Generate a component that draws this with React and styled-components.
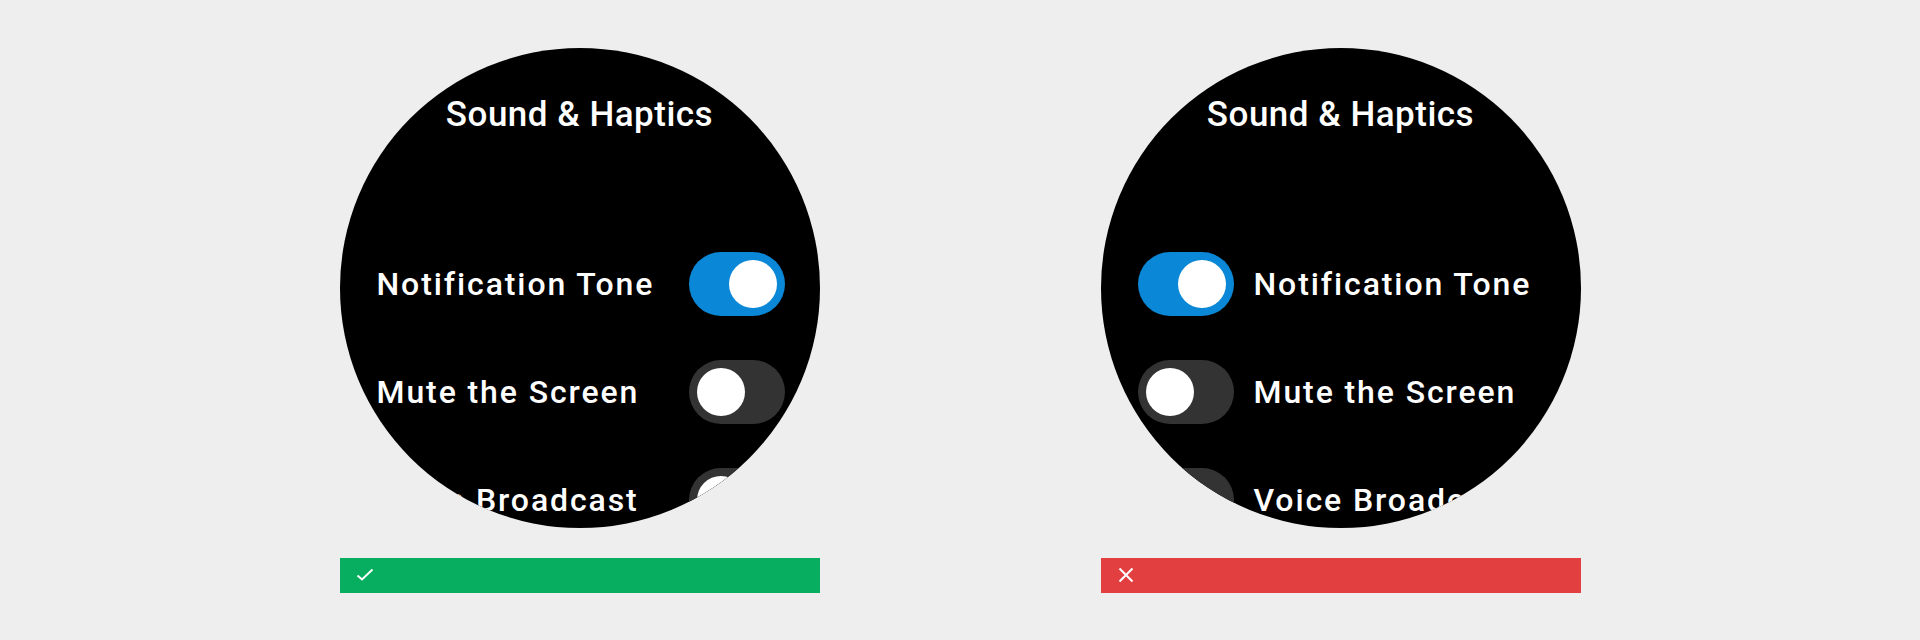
import React from 'react'
import styled, { createGlobalStyle } from 'styled-components'

const GlobalStyle = createGlobalStyle`
  body{
    margin:0;
    background:#eeeeee;
    font-family:Roboto, "Noto Sans", sans-serif;
  }
`

const Page = styled.div`
  height:640px;
  display:flex;
  align-items:center;
  justify-content:center;
  gap:281px;
`

const Panel = styled.div`
  width:480px;
  display:flex;
  flex-direction:column;
  gap:30px;
`

const Watch = styled.div`
  width:480px;
  height:480px;
  border-radius:50%;
  overflow:hidden;
  background:#000;
  color:#fff;
`

const Title = styled.div`
  padding-top:47px;
  font-size:35px;
  font-weight:500;
  letter-spacing:0.5px;
  line-height:40px;
  text-align:center;
`

const List = styled.div`
  margin-top:117px;
  display:flex;
  flex-direction:column;
  gap:44px;
  padding:0 35px 0 37px;
`

const Row = styled.div`
  display:flex;
  align-items:center;
  gap:20px;
  flex-direction:${props => props.flip ? 'row-reverse' : 'row'};
`

const Label = styled.span`
  flex:1;
  font-size:32px;
  font-weight:500;
  letter-spacing:1.9px;
  white-space:nowrap;
`

const Track = styled.div`
  flex:none;
  width:96px;
  height:64px;
  border-radius:32px;
  padding:8px;
  box-sizing:border-box;
  display:flex;
  justify-content:${props => props.on ? 'flex-end' : 'flex-start'};
  background:${props => props.on ? '#0a87d6' : '#333333'};
`

const Knob = styled.div`
  width:48px;
  height:48px;
  border-radius:50%;
  background:#fff;
`

const Status = styled.div`
  height:35px;
  display:flex;
  align-items:center;
  padding-left:16px;
  background:${props => props.ok ? '#07ae5f' : '#e24040'};
`

const items = [
  { label: 'Notification Tone', on: true },
  { label: 'Mute the Screen', on: false },
  { label: 'Voice Broadcast', on: false },
]

const Check = () => (
  <svg width="18" height="14" viewBox="0 0 18 14">
    <path d="M1.5 7.5 L6 11.5 L16.5 1.5" fill="none" stroke="#fff" strokeWidth="2" />
  </svg>
)

const Cross = () => (
  <svg width="16" height="16" viewBox="0 0 16 16" style={{ marginLeft: 1 }}>
    <path d="M1.5 1.5 L14.5 14.5 M14.5 1.5 L1.5 14.5" fill="none" stroke="#fff" strokeWidth="2" />
  </svg>
)

const Screen = ({ flip, ok }) => (
  <Panel>
    <Watch>
      <Title>Sound &amp; Haptics</Title>
      <List>
        {items.map(item => (
          <Row key={item.label} flip={flip ? 1 : 0}>
            <Label>{item.label}</Label>
            <Track on={item.on ? 1 : 0}>
              <Knob />
            </Track>
          </Row>
        ))}
      </List>
    </Watch>
    <Status ok={ok ? 1 : 0}>{ok ? <Check /> : <Cross />}</Status>
  </Panel>
)

const App = () => (
  <>
    <GlobalStyle />
    <Page>
      <Screen ok />
      <Screen flip />
    </Page>
  </>
)

export default App
